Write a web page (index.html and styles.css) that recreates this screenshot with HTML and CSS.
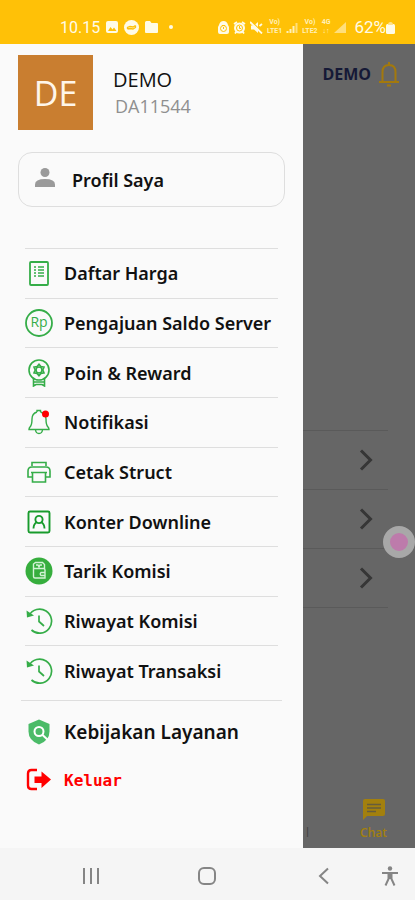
FILE: index.html
```html
<!DOCTYPE html>
<html lang="id">
<head>
    <meta charset="UTF-8">
    <meta name="viewport" content="width=device-width, initial-scale=1.0">
    <title>Menu Akun</title>
    <link rel="stylesheet" href="styles.css">
</head>
<body>
    <header class="status-bar">
        <div class="status-left">
            <span class="clock">10.15</span>
            <svg width="12" height="12" viewBox="0 0 12 12"><rect width="12" height="12" rx="2" fill="#fffbe6"/><path d="M2 10l2.500-4 2 2.500 1.500-2 2.500 3.500z" fill="#ffc107"/></svg>
            <svg width="15" height="15" viewBox="0 0 15 15"><circle cx="7.500" cy="7.500" r="7.500" fill="#fffbe6"/><path d="M3.500 9V7.500L6 6.500l3 .5 2.500-1.500M3.500 9l2.500-.5 3 .5 2.500-1.500v-2" stroke="#ffc107" stroke-width="1.300" fill="none"/></svg>
            <svg width="13" height="12" viewBox="0 0 13 12"><path d="M0 1.500Q0 0 1.500 0H5l1.500 2H12q1 0 1 1v8q0 1-1 1H1q-1 0-1-1z" fill="#fffbe6"/></svg>
            <span class="status-dot"></span>
        </div>
        <div class="status-right">
            <svg width="11" height="13" viewBox="0 0 11 13"><path d="M1 4Q2 0 5.500 0T10 4l1 2v5q0 2-2 2H2q-2 0-2-2V6z" fill="#fffbe6"/><circle cx="5.500" cy="7.500" r="3" fill="none" stroke="#ffc107"/><path d="M4 4.500h3M5.500 6v2" stroke="#ffc107"/></svg>
            <svg width="13" height="13" viewBox="0 0 13 13"><circle cx="6.500" cy="7" r="5.500" fill="#fffbe6"/><path d="M1 3l3-2M12 3L9 1M2 12.500l1.500-2M11 12.500l-1.500-2" stroke="#fffbe6" stroke-width="1.800"/><circle cx="6.500" cy="7" r="3" fill="none" stroke="#ffc107"/><path d="M6.500 5v2.500H8" stroke="#ffc107" fill="none"/></svg>
            <svg width="13" height="13" viewBox="0 0 13 13"><path d="M1 4.500h3L8 1v11L4 8.500H1z" fill="#fffbe6"/><path d="M1 0l11 11" stroke="#ffc107" stroke-width="1.500"/><path d="M0 1l12 11.500M9.500 5l2.500-2" stroke="#fffbe6" stroke-width="1.800"/></svg>
            <span class="network">Vo)<br>LTE1</span>
            <svg width="12" height="11" viewBox="0 0 12 11"><path d="M1.500 11V9M4.500 11V7M7.500 11V4" stroke="#fff0b8" stroke-width="2"/><path d="M10.500 11V1" stroke="#ffdf7c" stroke-width="2"/></svg>
            <span class="network">Vo)<br>LTE2</span>
            <span class="network">4G<br>↓↑</span>
            <svg width="12" height="11" viewBox="0 0 12 11"><path d="M0 11L12 0v11z" fill="#ffdf7c"/></svg>
            <span class="battery-text">62%</span>
            <svg class="battery" width="9" height="13" viewBox="0 0 9 13"><rect y="3" width="9" height="10" rx="1.500" fill="#fffbe6"/><path d="M2 4q0-3 2.500-3T7 4" fill="#ffe28a"/></svg>
        </div>
    </header>

    <main class="screen">
        <aside class="drawer">
            <div class="user">
                <div class="avatar">DE</div>
                <div>
                    <p class="user-name">DEMO</p>
                    <p class="user-id">DA11544</p>
                </div>
            </div>

            <button type="button" class="profile-btn">
                <svg width="20" height="24" viewBox="0 0 20 24" fill="#9a9a9a"><circle cx="10" cy="4.500" r="4.500"/><path d="M0 19v-2.500Q0 11 10 11t10 5.500V19z"/></svg>
                Profil Saya
            </button>

            <nav>
                <ul class="menu">
                    <li><a href="#">
                        <svg viewBox="0 0 28 28" fill="none" stroke="#35ad48"><rect x="5" y="3" width="18" height="23" rx="1" stroke-width="1.800"/><path d="M9 8h2M9 11h2M9 14h2M9 17h2M13 8h6M13 11h6M13 14h6M13 17h6" stroke-width="1.400"/></svg>
                        Daftar Harga</a></li>
                    <li><a href="#">
                        <svg viewBox="0 0 28 28"><circle cx="14" cy="14" r="13" fill="none" stroke="#35ad48" stroke-width="1.800"/><text x="14" y="18" class="rp">Rp</text></svg>
                        Pengajuan Saldo Server</a></li>
                    <li><a href="#">
                        <svg viewBox="0 0 28 28" fill="none" stroke="#35ad48" stroke-width="1.600"><circle cx="14" cy="11" r="10"/><circle cx="14" cy="11" r="3"/><path d="M14 5.200l1.900 2.400 3.100.5-1.200 2.900 1.200 2.900-3.100.5-1.900 2.400-1.900-2.400-3.100-.5L10.200 11 9 8.100l3.100-.5zM8.500 19.500V27l2.500-1.500h6l2.500 1.500v-7.500M9 23h10"/></svg>
                        Poin &amp; Reward</a></li>
                    <li><a href="#">
                        <svg viewBox="0 0 28 28" fill="none" stroke="#35ad48" stroke-width="1.400"><path d="M12 4V2.500h3.500V4M12 4Q7 5.500 7 11q0 6-2 8-1 1-1 2.500h20q0-1.500-1-2.500-2-2-2-8 0-5.500-5.500-7M10.500 22q.5 3.500 3.500 3.500t3.500-3.500"/><circle cx="20.500" cy="6" r="3.500" fill="#f00" stroke="none"/></svg>
                        Notifikasi</a></li>
                    <li><a href="#">
                        <svg viewBox="0 0 28 28" fill="none" stroke="#35ad48" stroke-width="1.600"><path d="M7 8V4.500h14V8M7 19H3V13q0-4 4-4h14q4 0 4 4v6h-4M7.500 14.500h13v9.500h-13zM6 14.500h16"/></svg>
                        Cetak Struct</a></li>
                    <li><a href="#">
                        <svg viewBox="0 0 28 28" fill="none" stroke="#189b2c" stroke-width="1.900"><rect x="3.500" y="3.500" width="21" height="21" rx="1.500"/><circle cx="14" cy="11.500" r="3.600"/><path d="M8.500 20.500q0-4.500 3.500-6.500M19.500 20.500q0-4.500-3.500-6.500"/></svg>
                        Konter Downline</a></li>
                    <li><a href="#">
                        <svg viewBox="0 0 28 28"><circle cx="14" cy="14" r="13.500" fill="#36ae3d"/><path d="M8.500 11.500h10q1.500 0 1.500 1.500v8H10q-1.500 0-1.500-1.500V7l2-1.500h7l2 2V12M11 8h2l1 2 1-2h2M20 15.500h-4q-1.500 1.500 0 3h4" fill="none" stroke="#d3f3d5" stroke-width="1.400"/></svg>
                        Tarik Komisi</a></li>
                    <li><a href="#">
                        <svg viewBox="0 0 28 28" fill="none" stroke="#35ad48" stroke-width="1.700"><path d="M4 8.500a12 12 0 1 1 2.500 14.500M14 8.500v6l5 4.500"/><path d="M1.500 3.500l.5 7 7-2z" fill="#35ad48" stroke="none"/></svg>
                        Riwayat Komisi</a></li>
                    <li><a href="#">
                        <svg viewBox="0 0 28 28" fill="none" stroke="#35ad48" stroke-width="1.700"><path d="M4 8.500a12 12 0 1 1 2.500 14.500M14 8.500v6l5 4.500"/><path d="M1.500 3.500l.5 7 7-2z" fill="#35ad48" stroke="none"/></svg>
                        Riwayat Transaksi</a></li>
                </ul>
                <ul class="menu-bottom">
                    <li><a href="#" class="policy">
                        <svg viewBox="0 0 28 28"><path d="M14 1.500L24.500 6v7.500q0 9-10.500 13-10.500-4-10.500-13V6z" fill="#4bbb68"/><circle cx="14" cy="13.500" r="4.500" fill="none" stroke="#fff" stroke-width="2"/><path d="M17 16.500l6.500 6" stroke="#fff" stroke-width="2"/></svg>
                        Kebijakan Layanan</a></li>
                    <li><a href="#" class="logout">
                        <svg viewBox="0 0 28 28"><path d="M12 4H6.500Q3 4 3 7.500v12Q3 23 6.500 23H12" fill="none" stroke="#f00" stroke-width="2.400"/><path d="M9.500 10.500h7v-5L26 13.500l-9.500 8.500v-5h-7z" fill="#f00"/></svg>
                        Keluar</a></li>
                </ul>
            </nav>
        </aside>

        <section class="page">
            <div class="page-header">
                <span>DEMO</span>
                <svg width="20" height="26" viewBox="0 0 20 26" fill="none" stroke="#a3790c" stroke-width="2"><path d="M0 21h20M3.500 21V11q0-7 6.500-7t6.500 7v10M10 4V1M8 24.500h4"/></svg>
            </div>
            <ul class="page-list">
                <li><a href="#" aria-label="Buka"><svg width="14" height="22" viewBox="0 0 14 22"><path d="M2 1.500l9.500 9.500L2 20.500"/></svg></a></li>
                <li><a href="#" aria-label="Buka"><svg width="14" height="22" viewBox="0 0 14 22"><path d="M2 1.500l9.500 9.500L2 20.500"/></svg></a></li>
                <li><a href="#" aria-label="Buka"><svg width="14" height="22" viewBox="0 0 14 22"><path d="M2 1.500l9.500 9.500L2 20.500"/></svg></a></li>
            </ul>
            <div class="tabs">
                <span class="tab-cut">l</span>
                <a href="#" class="tab-chat">
                    <svg width="22" height="21" viewBox="0 0 22 21"><path d="M0 2q0-2 2-2h18q2 0 2 2v13q0 2-2 2H4l-4 4z" fill="#a3800d"/><path d="M4 5.500h14M4 9h14M4 12.500h9" stroke="#665c3c" stroke-width="1.600"/></svg>
                    Chat
                </a>
            </div>
            <button type="button" class="assist" aria-label="Menu asisten"></button>
        </section>
    </main>

    <footer class="nav-bar">
        <button type="button" aria-label="Aplikasi terbaru"><svg width="18" height="18" viewBox="0 0 18 18"><path d="M2 1v16M9 1v16M16 1v16"/></svg></button>
        <button type="button" aria-label="Beranda"><svg width="20" height="20" viewBox="0 0 20 20"><rect x="2" y="2" width="16" height="16" rx="5"/></svg></button>
        <button type="button" aria-label="Kembali"><svg width="12" height="18" viewBox="0 0 12 18"><path d="M10 1.500L2 9l8 7.500"/></svg></button>
        <button type="button" class="access" aria-label="Aksesibilitas"><svg width="16" height="20" viewBox="0 0 16 20"><circle cx="8" cy="2.500" r="2.200" fill="#858585" stroke="none"/><path d="M0 7h16M6.500 7v6l-3 6.500M9.500 7v6l3 6.500M8 7v6"/></svg></button>
    </footer>
</body>
</html>
```

FILE: styles.css
```css
* {
    margin: 0;
    padding: 0;
    box-sizing: border-box;
    font-family: "Open Sans", "Noto Sans", sans-serif;
}

body {
    display: flex;
    flex-direction: column;
    min-height: 100vh;
    background: #fafafa;
}

ul {
    list-style: none;
}

a {
    color: inherit;
    text-decoration: none;
}

button {
    border: none;
    background: none;
    cursor: pointer;
}

svg {
    flex-shrink: 0;
}

/* status bar */
.status-bar {
    display: flex;
    justify-content: space-between;
    height: 44px;
    padding: 10px 20px 0 60px;
    background: #ffc107;
    color: #fffbe6;
}

.status-left,
.status-right {
    display: flex;
    align-items: center;
}

.status-left {
    gap: 6px;
}

.status-right {
    gap: 4px;
}

.clock,
.battery-text {
    font-family: Roboto, sans-serif;
    font-size: 16px;
}

.battery-text {
    font-size: 17px;
    margin-left: 4px;
}

.battery {
    margin-left: -4px;
}

.status-dot {
    width: 4px;
    height: 4px;
    margin-left: 5px;
    border-radius: 50%;
    background: #fffbe6;
}

.network {
    font-family: Roboto, sans-serif;
    font-size: 7px;
    font-weight: 700;
    line-height: 9px;
    text-align: center;
    color: #fff0b8;
}

/* layout */
.screen {
    display: flex;
    flex: 1;
}

.drawer {
    width: 73%;
    padding: 11px 18px 40px;
    background: #fafafa;
}

/* user */
.user {
    display: flex;
    align-items: center;
    gap: 20px;
}

.avatar {
    display: flex;
    justify-content: center;
    align-items: center;
    width: 75px;
    height: 75px;
    background: #c97e30;
    color: #fff6ea;
    font-size: 34px;
}

.user-name {
    font-size: 20px;
    line-height: 26px;
    color: #111;
}

.user-id {
    padding-left: 2px;
    font-size: 18px;
    line-height: 26px;
    color: #8f8f8f;
}

.profile-btn {
    display: flex;
    align-items: center;
    gap: 17px;
    width: 100%;
    height: 55px;
    margin-top: 22px;
    padding: 0 16px;
    border: 1px solid #dedede;
    border-radius: 14px;
    color: #111;
    font-family: "Noto Sans", sans-serif;
    font-size: 18px;
    font-weight: 600;
}

/* menu */
.menu {
    display: grid;
    grid-auto-rows: 1fr;
    min-height: 447px;
    margin: 41px 7px 0;
}

.menu li {
    display: flex;
    border-top: 1px solid #dedede;
}

.menu a,
.menu-bottom a {
    display: flex;
    align-items: center;
    gap: 11px;
    color: #111;
    font-family: "Noto Sans", sans-serif;
    font-size: 18px;
    font-weight: 600;
    white-space: nowrap;
}

.menu svg,
.menu-bottom svg {
    width: 28px;
    height: 28px;
}

.rp {
    fill: #35ad48;
    font-size: 14px;
    font-weight: 400;
    text-anchor: middle;
}

.menu-bottom {
    margin: 5px 3px 0;
    padding: 7px 4px 0;
    border-top: 1px solid #dedede;
}

.menu-bottom a {
    height: 48px;
}

.menu-bottom .policy {
    font-size: 19px;
}

.menu-bottom .logout {
    color: #f00;
    font-family: "DejaVu Sans Mono", monospace;
    font-size: 16px;
    font-weight: 700;
}

/* dimmed page behind the drawer */
.page {
    position: relative;
    display: flex;
    flex: 1;
    flex-direction: column;
    justify-content: space-between;
    background: #666;
}

.page-header {
    display: flex;
    justify-content: flex-end;
    align-items: center;
    gap: 8px;
    height: 60px;
    padding-right: 16px;
    color: #151936;
    font-size: 16px;
    font-weight: 700;
}

.page-list {
    margin: 134px 27px 0 0;
    border-top: 1px solid #5a5a5a;
}

.page-list li {
    border-bottom: 1px solid #5a5a5a;
}

.page-list a {
    display: flex;
    justify-content: flex-end;
    align-items: center;
    height: 58px;
    padding-right: 15px;
}

.page-list path {
    fill: none;
    stroke: #363636;
    stroke-width: 3;
}

.tabs {
    display: flex;
    justify-content: space-between;
    align-items: flex-end;
    padding: 0 28px 6px 0;
    font-size: 12px;
    line-height: 18px;
}

.tab-cut {
    padding-left: 3px;
    color: #444;
}

.tab-chat {
    display: flex;
    flex-direction: column;
    align-items: center;
    gap: 4px;
    color: #a3800d;
    font-weight: 600;
}

.assist {
    position: absolute;
    right: 0;
    top: 60%;
    width: 32px;
    height: 32px;
    border: 7px solid #a8a8a8;
    border-radius: 50%;
    background: #bd7bab;
}

/* system navigation */
.nav-bar {
    display: grid;
    grid-template-columns: 28fr 28fr 28fr 8fr;
    height: 52px;
    padding-left: 8%;
    background: #f5f5f5;
}

.nav-bar button {
    display: flex;
    justify-content: center;
    align-items: center;
    padding-top: 4px;
}

.nav-bar .access {
    justify-content: flex-start;
}

.nav-bar svg {
    fill: none;
    stroke: #858585;
    stroke-width: 2;
}
```
